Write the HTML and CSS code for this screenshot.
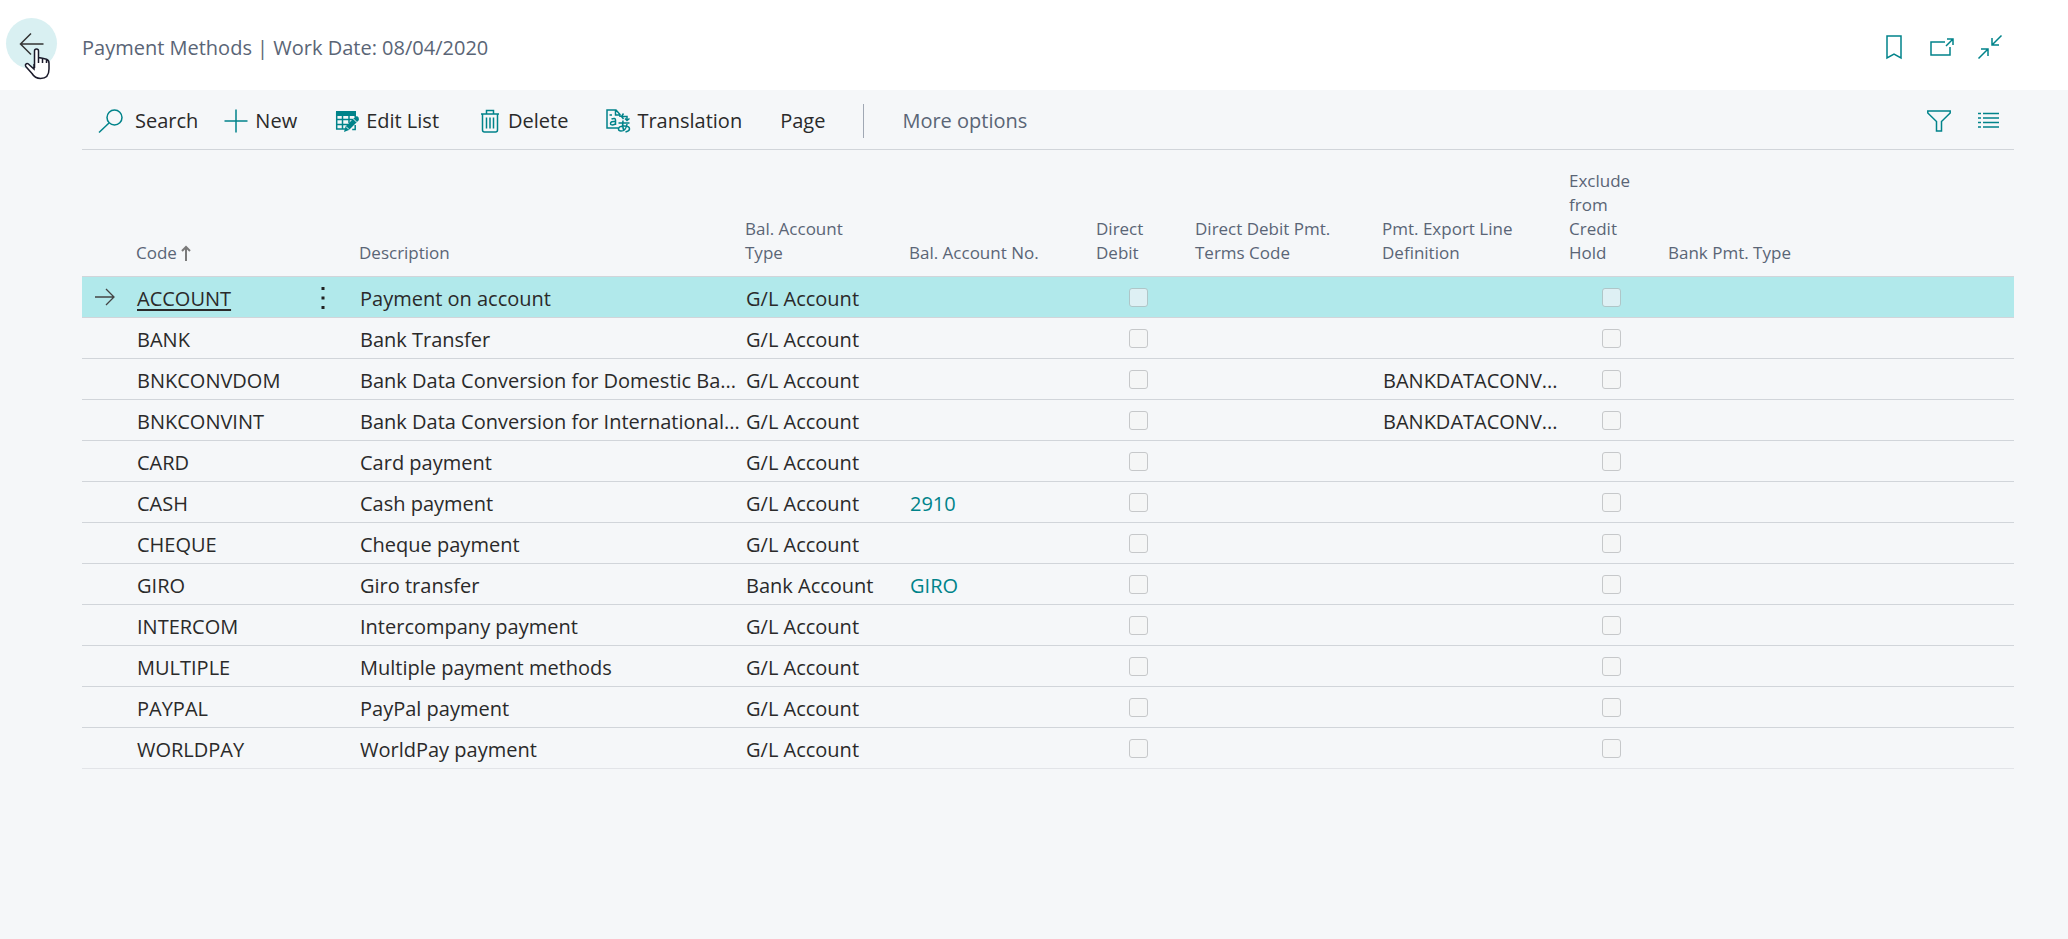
FILE: index.html
```html
<!DOCTYPE html>
<html lang="en">
<head>
<meta charset="utf-8">
<title>Payment Methods</title>
<link rel="stylesheet" href="styles.css">
</head>
<body>
<header class="top">
  <button class="back" type="button" aria-label="Back">
    <svg class="back-arrow" width="26" height="24" viewBox="0 0 26 24"><path d="M24.500 12H2M12 1.500L1.500 12L12 22.500"/></svg>
    <svg class="pointer" width="27" height="34" viewBox="0 0 27 34"><path d="M10.500 21V4a2 2 0 0 1 4 0V10.500l4 .7 4 1q2.500 1 2.500 4V22q0 9.500-8.500 9.500-5.500 0-8.500-5L1.800 19.500q-1-2 .7-2.800 1.500-.5 3 1.300L10 22V17M14.500 10v6M18.500 11.200V16M22.500 12.200V16"/></svg>
  </button>
  <h1 class="title">Payment Methods | Work Date: 08/04/2020</h1>
  <div class="window-tools">
    <button class="tool" type="button" aria-label="Bookmark"><svg width="24" height="24" viewBox="0 0 24 24"><path d="M5 1h14v22l-7-4-7 4z"/></svg></button>
    <button class="tool" type="button" aria-label="Open in new window"><svg width="24" height="24" viewBox="0 0 24 24"><path d="M15 7H1v13h19v-8M16 11l7-7M17 4h6v6"/></svg></button>
    <button class="tool" type="button" aria-label="Collapse"><svg width="24" height="24" viewBox="0 0 24 24"><path d="M23.500 .500L14 10M14 3v7h7M.500 23.500L10 14M3 14h7v7"/></svg></button>
  </div>
</header>
<main class="page">
  <nav class="toolbar">
    <button class="action search" type="button"><svg width="26" height="24" viewBox="0 0 26 24"><circle cx="16.500" cy="8.500" r="7.500"/><path d="M11 14L1 23.500"/></svg>Search</button>
    <button class="action new" type="button"><svg width="24" height="24" viewBox="0 0 24 24"><path d="M12 .500v23M.500 12h23"/></svg>New</button>
    <button class="action" type="button"><svg width="24" height="24" viewBox="0 0 24 24"><path class="fill" d="M1 2h20v5H1z"/><path d="M1.700 3v17H11M1 10.500h17M1 15.500h12M7.500 6v14M14 6v8M20.200 6v2M20.200 16v4.500h-3"/><path class="fill" d="M9 23l1.500-5.500L20.500 7.500q2-1 3 1t0 3L14 21z"/><path class="cut" d="M18 9.500l4 4M11 17.500l3 3"/></svg>Edit List</button>
    <button class="action" type="button"><svg width="24" height="24" viewBox="0 0 24 24"><path d="M4 5h18M9.500 5V1.500h7V5M5.500 5v16q0 2 2 2h11q2 0 2-2V5M9.500 8.500v11M13 8.500v11M16.500 8.500v11"/></svg>Delete</button>
    <button class="action" type="button"><svg width="24" height="24" viewBox="0 0 24 24"><path d="M12 19H1V1h9l4 4.500V8M9.500 1v5H14M3.500 6H6M16 7.500h5v3.500M19 9.500l2 2 2.500-2M17.500 4.500L15.500 7.500l2 2.500M5.500 10q4-1.500 4 1v5M9.500 12.500q-5-.5-5 2t5 .500M12.500 14h11M17 11.500q-1 6 1 10.500M21 15q-1 7-6 7-2.500 0-2.500-2 0-3 6-3 5 0 5 3 0 2-4 3"/></svg>Translation</button>
    <button class="action" type="button">Page</button>
    <span class="divider"></span>
    <button class="action more" type="button">More options</button>
    <div class="view-tools">
      <button class="tool" type="button" aria-label="Filter"><svg width="24" height="24" viewBox="0 0 24 24"><path d="M.800 2h22.400v2L14.500 12.500V22h-5V12.500L.800 4z"/></svg></button>
      <button class="tool" type="button" aria-label="List view"><svg width="24" height="24" viewBox="0 0 24 24"><path d="M1 4.500h3M6 4.500h16M1 9h3M6 9h16M1 13.500h3M6 13.500h16M1 18h3M6 18h16"/></svg></button>
    </div>
  </nav>
  <table class="list">
    <colgroup><col class="c-mark"><col class="c-code"><col class="c-menu"><col class="c-desc"><col class="c-type"><col class="c-text"><col class="c-check"><col class="c-text"><col class="c-text"><col class="c-check"><col></colgroup>
    <thead>
      <tr><th></th><th>Code <svg class="sort" width="10" height="16" viewBox="0 0 10 16"><path d="M5 16V2M1 6L5 2L9 6"/></svg></th><th></th><th>Description</th><th class="narrow">Bal. Account Type</th><th>Bal. Account No.</th><th>Direct Debit</th><th>Direct Debit Pmt. Terms Code</th><th>Pmt. Export Line Definition</th><th>Exclude from Credit Hold</th><th>Bank Pmt. Type</th></tr>
    </thead>
    <tbody>
      <tr class="current"><td class="mark"><svg width="20" height="18" viewBox="0 0 20 18"><path d="M0 9h19M11 1l8 8-8 8"/></svg></td><td><a class="code" href="#">ACCOUNT</a></td><td class="menu"><button class="dots" type="button" aria-label="Show more options"><svg width="4" height="24" viewBox="0 0 4 24"><path d="M.500 1h3v3h-3zM.500 10.500h3v3h-3zM.500 20h3v3h-3z"/></svg></button></td><td>Payment on account</td><td>G/L Account</td><td></td><td class="check"><input type="checkbox" disabled aria-label="Direct Debit"></td><td></td><td></td><td class="check"><input type="checkbox" disabled aria-label="Exclude from Credit Hold"></td><td></td></tr>
      <tr><td></td><td><a class="code" href="#">BANK</a></td><td></td><td>Bank Transfer</td><td>G/L Account</td><td></td><td class="check"><input type="checkbox" disabled aria-label="Direct Debit"></td><td></td><td></td><td class="check"><input type="checkbox" disabled aria-label="Exclude from Credit Hold"></td><td></td></tr>
      <tr><td></td><td><a class="code" href="#">BNKCONVDOM</a></td><td></td><td>Bank Data Conversion for Domestic Ba...</td><td>G/L Account</td><td></td><td class="check"><input type="checkbox" disabled aria-label="Direct Debit"></td><td></td><td>BANKDATACONV...</td><td class="check"><input type="checkbox" disabled aria-label="Exclude from Credit Hold"></td><td></td></tr>
      <tr><td></td><td><a class="code" href="#">BNKCONVINT</a></td><td></td><td>Bank Data Conversion for International...</td><td>G/L Account</td><td></td><td class="check"><input type="checkbox" disabled aria-label="Direct Debit"></td><td></td><td>BANKDATACONV...</td><td class="check"><input type="checkbox" disabled aria-label="Exclude from Credit Hold"></td><td></td></tr>
      <tr><td></td><td><a class="code" href="#">CARD</a></td><td></td><td>Card payment</td><td>G/L Account</td><td></td><td class="check"><input type="checkbox" disabled aria-label="Direct Debit"></td><td></td><td></td><td class="check"><input type="checkbox" disabled aria-label="Exclude from Credit Hold"></td><td></td></tr>
      <tr><td></td><td><a class="code" href="#">CASH</a></td><td></td><td>Cash payment</td><td>G/L Account</td><td><a class="link" href="#">2910</a></td><td class="check"><input type="checkbox" disabled aria-label="Direct Debit"></td><td></td><td></td><td class="check"><input type="checkbox" disabled aria-label="Exclude from Credit Hold"></td><td></td></tr>
      <tr><td></td><td><a class="code" href="#">CHEQUE</a></td><td></td><td>Cheque payment</td><td>G/L Account</td><td></td><td class="check"><input type="checkbox" disabled aria-label="Direct Debit"></td><td></td><td></td><td class="check"><input type="checkbox" disabled aria-label="Exclude from Credit Hold"></td><td></td></tr>
      <tr><td></td><td><a class="code" href="#">GIRO</a></td><td></td><td>Giro transfer</td><td>Bank Account</td><td><a class="link" href="#">GIRO</a></td><td class="check"><input type="checkbox" disabled aria-label="Direct Debit"></td><td></td><td></td><td class="check"><input type="checkbox" disabled aria-label="Exclude from Credit Hold"></td><td></td></tr>
      <tr><td></td><td><a class="code" href="#">INTERCOM</a></td><td></td><td>Intercompany payment</td><td>G/L Account</td><td></td><td class="check"><input type="checkbox" disabled aria-label="Direct Debit"></td><td></td><td></td><td class="check"><input type="checkbox" disabled aria-label="Exclude from Credit Hold"></td><td></td></tr>
      <tr><td></td><td><a class="code" href="#">MULTIPLE</a></td><td></td><td>Multiple payment methods</td><td>G/L Account</td><td></td><td class="check"><input type="checkbox" disabled aria-label="Direct Debit"></td><td></td><td></td><td class="check"><input type="checkbox" disabled aria-label="Exclude from Credit Hold"></td><td></td></tr>
      <tr><td></td><td><a class="code" href="#">PAYPAL</a></td><td></td><td>PayPal payment</td><td>G/L Account</td><td></td><td class="check"><input type="checkbox" disabled aria-label="Direct Debit"></td><td></td><td></td><td class="check"><input type="checkbox" disabled aria-label="Exclude from Credit Hold"></td><td></td></tr>
      <tr><td></td><td><a class="code" href="#">WORLDPAY</a></td><td></td><td>WorldPay payment</td><td>G/L Account</td><td></td><td class="check"><input type="checkbox" disabled aria-label="Direct Debit"></td><td></td><td></td><td class="check"><input type="checkbox" disabled aria-label="Exclude from Credit Hold"></td><td></td></tr>
    </tbody>
  </table>
</main>
</body>
</html>
```

FILE: styles.css
```css
* { box-sizing: border-box; }

body {
  margin: 0;
  min-height: 100vh;
  background: #f5f7f9;
  color: #2a2a2a;
  font: 20px/28px "Open Sans", "Noto Sans", sans-serif;
}

button {
  margin: 0;
  padding: 0;
  border: 0;
  background: none;
  color: inherit;
  font: inherit;
}

svg {
  display: block;
  flex: none;
  overflow: visible;
  fill: none;
  stroke: #00838a;
  stroke-width: 1.5;
}

.top {
  display: flex;
  align-items: center;
  height: 90px;
  padding: 0 66px 0 6px;
  background: #fff;
}

.back {
  position: relative;
  display: grid;
  place-items: center;
  width: 51px;
  height: 51px;
  margin-bottom: 3px;
  border-radius: 50%;
  background: #d9f0f2;
}

.back-arrow { stroke: #333; }

.pointer {
  position: absolute;
  left: 18px;
  top: 29px;
  fill: #fff;
  stroke: #1a1a2a;
}

.title {
  flex: 1;
  margin: 0 0 0 25px;
  padding-top: 5px;
  color: #5a6576;
  font-size: 20px;
  font-weight: 400;
}

.window-tools,
.view-tools {
  display: flex;
  gap: 24px;
}

.window-tools { padding-top: 4px; }
.tool { width: 24px; height: 24px; }

.page { padding: 0 54px 0 82px; }

.toolbar {
  display: flex;
  align-items: center;
  gap: 38px;
  height: 60px;
  padding: 3px 13px 0 16px;
  border-bottom: 1px solid #d1d5da;
}

.action {
  display: flex;
  align-items: center;
  gap: 7px;
  white-space: nowrap;
}

.search { gap: 11px; }
.new { margin-left: -12px; }
.fill { fill: #00838a; stroke: none; }
.cut { stroke: #f5f7f9; stroke-width: 1; }
.divider { width: 1px; height: 34px; background: #a0a8b4; }
.more { color: #5a6576; }
.view-tools { margin-left: auto; gap: 26px; }

.list {
  width: 100%;
  table-layout: fixed;
  border-collapse: collapse;
}

.c-mark { width: 46px; }
.c-code { width: 167px; }
.c-menu { width: 56px; }
.c-desc { width: 386px; }
.c-type { width: 164px; }
.c-text { width: 187px; }
.c-check { width: 99px; }

th {
  height: 126px;
  padding: 0 8px 11px;
  border-bottom: 1px solid #d1d5da;
  color: #5a6576;
  font-size: 17px;
  font-weight: 400;
  line-height: 24px;
  text-align: left;
  vertical-align: bottom;
}

.narrow { padding-right: 32px; }

.sort {
  display: inline-block;
  vertical-align: -2px;
  stroke: #7a7a7a;
  stroke-width: 2;
}

td {
  height: 41px;
  padding: 4px 0 0 9px;
  border-bottom: 1px solid #d1d5da;
  white-space: nowrap;
}

tr:last-child td { border-bottom-color: #e2e4e8; }
.current td { background: #b1e9eb; }
.current .mark { padding: 0 0 0 13px; }
.mark svg { stroke: #444; stroke-width: 1.3; }
.code { color: inherit; text-decoration: none; }
.current .code {
  text-decoration: underline;
  text-decoration-thickness: 2px;
  text-underline-offset: 3px;
}
.link { color: #00838a; text-decoration: none; }
.current .menu { padding: 2px 0 0; }
.dots { display: block; margin: 0 auto; }
.dots svg { fill: #212121; stroke: none; }

.check { padding: 1px 0 0 1px; }

.check input {
  display: block;
  width: 19px;
  height: 19px;
  margin: 0 auto;
  appearance: none;
  border: 1px solid #c6c8ca;
  border-radius: 3px;
  background: #f5f6f6;
}

.current .check input {
  border-color: #afc6c8;
  background: #def0f4;
}
```
